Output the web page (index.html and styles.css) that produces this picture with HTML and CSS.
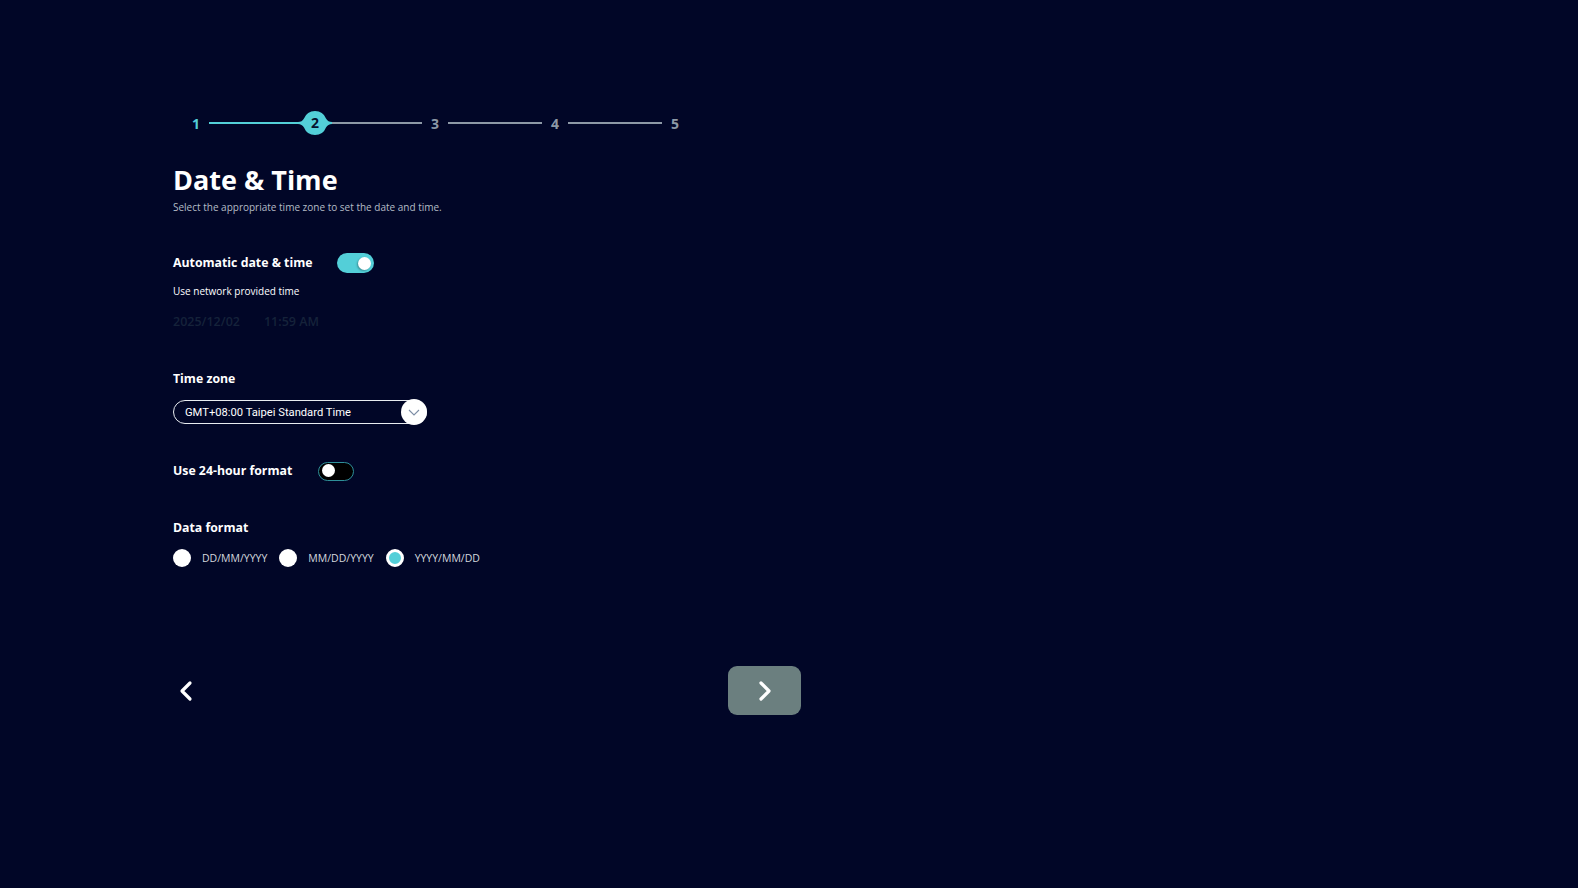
FILE: index.html
```html
<!DOCTYPE html>
<html lang="en">
  <head>
    <meta charset="UTF-8" />
    <meta name="viewport" content="width=device-width, initial-scale=1.0" />
    <title>Date &amp; Time</title>
    <link rel="stylesheet" href="styles.css">
  </head>
  <body>
    <div class="page">
      <div class="stepper">
        <span class="step-num done">1</span>
        <span class="step-line done to-current"></span>
        <span class="step-current">
          <svg width="34" height="26" viewBox="0 0 34 26">
            <path d="M0 12 Q4 12 6 8.5 A11.8 11.8 0 0 1 28 8.5 Q30 12 34 12 L34 14 Q30 14 28 17.5 A11.8 11.8 0 0 1 6 17.5 Q4 14 0 14 Z" fill="#53cfd8" />
          </svg>
          <span class="step-current-num">2</span>
        </span>
        <span class="step-line from-current"></span>
        <span class="step-num">3</span>
        <span class="step-line"></span>
        <span class="step-num">4</span>
        <span class="step-line"></span>
        <span class="step-num">5</span>
      </div>

      <h1 class="title">Date &amp; Time</h1>
      <p class="subtitle">Select the appropriate time zone to set the date and time.</p>

      <div class="row auto-row">
        <span class="label">Automatic date &amp; time</span>
        <span class="toggle on"><span class="knob"></span></span>
      </div>
      <p class="hint">Use network provided time</p>
      <div class="current">
        <span>2025/12/02</span>
        <span>11:59 AM</span>
      </div>

      <div class="label zone-label">Time zone</div>
      <div class="select">
        <span class="select-text">GMT+08:00 Taipei Standard Time</span>
        <span class="select-btn">
          <svg width="12" height="7" viewBox="0 0 12 7">
            <path d="M1 1 L6 6 L11 1" fill="none" stroke="#7d8ea6" stroke-width="1.1" />
          </svg>
        </span>
      </div>

      <div class="row hour-row">
        <span class="label">Use 24-hour format</span>
        <span class="toggle off"><span class="knob"></span></span>
      </div>

      <div class="label format-label">Data format</div>
      <div class="radios">
        <label class="radio"><span class="dot"></span>DD/MM/YYYY</label>
        <label class="radio"><span class="dot"></span>MM/DD/YYYY</label>
        <label class="radio"><span class="dot checked"></span>YYYY/MM/DD</label>
      </div>

      <div class="nav">
        <button class="back">
          <svg width="18" height="22" viewBox="0 0 18 22">
            <path d="M13 3 L5 11 L13 19" fill="none" stroke="#fff" stroke-width="3.2" stroke-linecap="round" stroke-linejoin="round" />
          </svg>
        </button>
        <button class="next">
          <svg width="18" height="22" viewBox="0 0 18 22">
            <path d="M5 3 L13 11 L5 19" fill="none" stroke="#fff" stroke-width="3.2" stroke-linecap="round" stroke-linejoin="round" />
          </svg>
        </button>
      </div>
    </div>
  </body>
</html>
```

FILE: styles.css
```css
body {
  margin: 0;
  background: #010627;
  color: #fff;
  font-family: "Open Sans", sans-serif;
}
.page {
  padding: 110px 0 0 173px;
  width: 628px;
}
.stepper {
  display: flex;
  align-items: center;
  height: 26px;
  margin-left: 18px;
}
.step-num {
  width: 10px;
  text-align: center;
  font-size: 14px;
  font-weight: 700;
  color: #8d99a6;
}
.step-num.done {
  color: #53cfd8;
}
.step-line {
  width: 94px;
  height: 2px;
  margin: 0 8px;
  background: #8d99a6;
}
.step-line.done {
  background: #53cfd8;
}
.step-line.to-current {
  margin-right: 0;
  width: 89px;
}
.step-line.from-current {
  margin-left: 0;
  width: 90px;
}
.step-current {
  position: relative;
  width: 34px;
  height: 26px;
}
.step-current svg {
  display: block;
}
.step-current-num {
  position: absolute;
  inset: 0;
  text-align: center;
  line-height: 26px;
  font-size: 14px;
  font-weight: 700;
  color: #06122e;
}
.title {
  margin: 28px 0 0;
  font-size: 27px;
  line-height: 32px;
  font-weight: 700;
}
.subtitle {
  margin: 4px 0 0;
  font-size: 10px;
  line-height: 14px;
  color: #b4bcc6;
}
.row {
  display: flex;
  align-items: center;
}
.auto-row {
  margin-top: 39px;
  height: 20px;
}
.label {
  font-size: 12.3px;
  line-height: 18px;
  font-weight: 700;
}
.toggle {
  position: relative;
  width: 37px;
  height: 20px;
  border-radius: 10px;
  box-sizing: border-box;
}
.toggle .knob {
  position: absolute;
  top: 3px;
  width: 13px;
  height: 13px;
  border-radius: 50%;
  background: #fff;
}
.toggle.on {
  margin-left: 25px;
  background: #53cfd8;
}
.toggle.on .knob {
  right: 3px;
  top: 3.5px;
  box-shadow: -1px 1px 2px rgba(0, 0, 0, 0.3);
}
.toggle.off {
  margin-left: 26px;
  width: 36px;
  height: 19px;
  background: #000;
  border: 1.5px solid #2e8f99;
}
.toggle.off .knob {
  left: 3px;
  top: 1.5px;
}
.hint {
  margin: 11px 0 0;
  font-size: 10px;
  line-height: 14px;
  font-weight: 500;
}
.current {
  display: flex;
  gap: 24px;
  margin-top: 15px;
  font-size: 12.5px;
  line-height: 18px;
  font-weight: 600;
  color: #15223a;
}
.zone-label {
  margin-top: 39px;
}
.select {
  display: flex;
  align-items: center;
  justify-content: space-between;
  margin-top: 12px;
  width: 254px;
  height: 24px;
  box-sizing: border-box;
  border: 1px solid #e8ecf0;
  border-radius: 12px;
}
.select-text {
  padding-left: 11px;
  font-family: Roboto, sans-serif;
  font-size: 11.2px;
  color: #fff;
}
.select-btn {
  display: flex;
  align-items: center;
  justify-content: center;
  width: 26px;
  height: 26px;
  margin-right: -1px;
  border-radius: 50%;
  background: #fff;
}
.hour-row {
  margin-top: 37px;
  height: 20px;
}
.format-label {
  margin-top: 38px;
}
.radios {
  display: flex;
  gap: 12px;
  margin-top: 12px;
}
.radio {
  display: flex;
  align-items: center;
  gap: 11px;
  font-size: 10.5px;
  color: #d4d8de;
}
.dot {
  width: 18px;
  height: 18px;
  border-radius: 50%;
  background: #fff;
  box-sizing: border-box;
}
.dot.checked {
  background: #53cfd8;
  border: 3px solid #fff;
}
.nav {
  display: flex;
  justify-content: space-between;
  align-items: center;
  margin-top: 99px;
}
.nav button {
  display: flex;
  align-items: center;
  justify-content: center;
  border: none;
  padding: 0;
  cursor: pointer;
}
.back {
  width: 26px;
  height: 49px;
  background: none;
}
.next {
  width: 73px;
  height: 49px;
  border-radius: 9px;
  background: #6b7f7f;
}
```
